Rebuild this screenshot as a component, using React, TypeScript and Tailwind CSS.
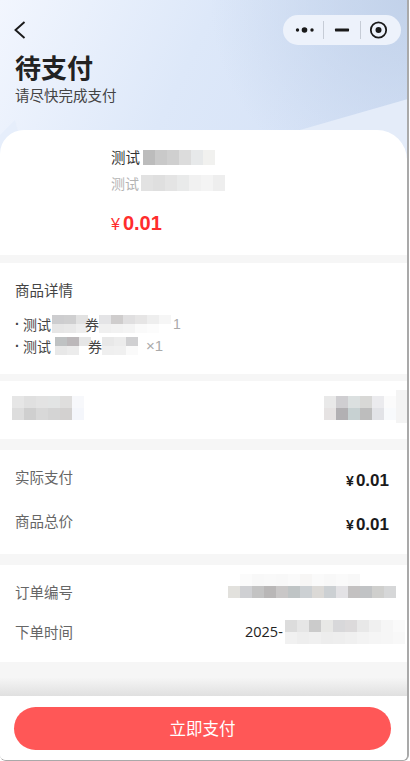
import React from 'react';

const CJK = "font-['Noto_Sans_CJK_SC','Noto_Sans',sans-serif]";
const LATIN = "font-['Liberation_Sans',sans-serif]";

// pixelated privacy blur in the screenshot, one array per row of cells
const Mosaic = ({ rows, className = '', cell = 'h-3' }: { rows: string[][]; className?: string; cell?: string }) => (
  <div className={`flex flex-col shrink-0 ${className}`}>
    {rows.map((row, i) => (
      <div key={i} className="flex">
        {row.map((c, j) => (
          <div key={j} className={`w-3 ${cell} ${c}`} />
        ))}
      </div>
    ))}
  </div>
);

const Yuan = ({ className }: { className: string }) => <span className={className}>¥</span>;

const Gap = ({ className }: { className: string }) => <div className={`bg-[#f6f6f6] shrink-0 ${className}`} />;

const Capsule = () => (
  <div className="h-[30px] w-[118px] rounded-full bg-[#edf2fb] overflow-hidden">
    <svg width="118" height="30" viewBox="0 0 118 30" fill="none">
      <circle cx="14.5" cy="15" r="1.7" fill="#1a1a1a" />
      <circle cx="21.5" cy="15" r="2.8" fill="#1a1a1a" />
      <circle cx="29" cy="15" r="1.7" fill="#1a1a1a" />
      <rect x="40" y="6" width="1" height="18" fill="#c6ccd6" />
      <rect x="52" y="13.6" width="14" height="2.8" rx="0.6" fill="#1a1a1a" />
      <rect x="77" y="6" width="1" height="18" fill="#c6ccd6" />
      <circle cx="95.5" cy="15" r="7.7" stroke="#1a1a1a" strokeWidth="1.8" />
      <circle cx="95.5" cy="15" r="3" fill="#1a1a1a" />
    </svg>
  </div>
);

const Header = () => (
  <div className="relative h-[158px] shrink-0 bg-[radial-gradient(circle_at_100%_0%,#c2d2ea_0%,transparent_45%),linear-gradient(115deg,#f2f6fe_0%,#dde8f9_45%,#d3e0f6_100%)]">
    <svg className="absolute inset-0" width="408" height="158" viewBox="0 0 408 158" fill="none">
      <path d="M408 99 L300 130 L408 158 Z" fill="#e4ecf9" />
      <path d="M0 135 L15 120 L25 158 L0 158 Z" fill="#e6eefb" />
    </svg>
    <div className="relative flex items-start justify-between pt-[15px] pl-[14px] pr-[6px]">
      <svg className="mt-[6px]" width="12" height="18" viewBox="0 0 12 18" fill="none">
        <path d="M10.5 1 L1.5 9 L10.5 17" stroke="#1a1a1a" strokeWidth="1.9" />
      </svg>
      <Capsule />
    </div>
    <div className={`relative pl-[15px] mt-[4px] ${CJK}`}>
      <div className="text-[26px] leading-[36px] font-bold text-[#222]">待支付</div>
      <div className="text-[14.5px] leading-[20px] text-[#444]">请尽快完成支付</div>
    </div>
  </div>
);

const ProductCard = () => (
  <div className={`relative -mt-[28px] h-[125px] shrink-0 bg-white rounded-tl-[24px] rounded-tr-[30px] pl-[111px] pt-[16px] ${CJK}`}>
    <div className="flex items-center h-[22px]">
      <span className="text-[14.5px] leading-[22px] text-[#333]">测试</span>
      <Mosaic
        className="ml-[3px]"
        cell="h-[15px]"
        rows={[['bg-[#bcbcbc]', 'bg-[#c9c9c9]', 'bg-[#cfcfcf]', 'bg-[#dcdcdc]', 'bg-[#e7e9ea]', 'bg-[#f1f1ef]']]}
      />
    </div>
    <div className="flex items-center h-[22px] mt-[4px]">
      <span className="text-[14px] leading-[22px] text-[#b4b4b4]">测试</span>
      <Mosaic
        className="ml-[2px]"
        cell="h-[16px]"
        rows={[['bg-[#e2e2e2]', 'bg-[#dfdfdf]', 'bg-[#e4e4e4]', 'bg-[#e9eaea]', 'bg-[#f1f1f1]', 'bg-[#f4f4f4]', 'bg-[#eeeeee]']]}
      />
    </div>
    <div className={`flex items-baseline mt-[17px] text-[#ff2d2d] font-bold ${LATIN}`}>
      <Yuan className="text-[16px] font-normal mr-[3px]" />
      <span className="text-[20px] leading-[24px]">0.01</span>
    </div>
  </div>
);

const GoodsDetail = () => (
  <div className={`h-[111px] shrink-0 bg-white pl-[15px] pt-[16px] ${CJK}`}>
    <div className="text-[14.5px] leading-[22px] text-[#444]">商品详情</div>
    <div className="flex items-center h-[22px] mt-[12px] text-[14px] text-[#444]">
      <span className={`w-[8px] font-bold ${LATIN}`}>·</span>
      <span>测试</span>
      <Mosaic
        className="ml-[1px]"
        cell="h-[9px]"
        rows={[
          ['bg-[#cdcdcf]', 'bg-[#cfcfd0]', 'bg-[#e2e2e2]'],
          ['bg-[#e6e6e6]', 'bg-[#e8e8e8]', 'bg-[#eeeeee]'],
        ]}
      />
      <span className="ml-[-3px] w-[14px]">券</span>
      <Mosaic
        cell="h-[9px]"
        rows={[
          ['bg-[#e4e4e6]', 'bg-[#cfcdcd]', 'bg-[#e0dfe0]', 'bg-[#e6e5e5]', 'bg-[#eeeeee]', 'bg-[#f6f6f6]'],
          ['bg-[#f0f0f0]', 'bg-[#f2f2f2]', 'bg-[#f4f4f4]', 'bg-[#fafafa]', 'bg-[#fcfcfc]', 'bg-white'],
        ]}
      />
      <span className={`ml-[2px] text-[#aaa] ${LATIN}`}>1</span>
    </div>
    <div className="flex items-center h-[22px] text-[14px] text-[#444]">
      <span className={`w-[8px] font-bold ${LATIN}`}>·</span>
      <span>测试</span>
      <Mosaic
        className="ml-[4px]"
        cell="h-[9px]"
        rows={[
          ['bg-[#bfc2c3]', 'bg-[#bcb8ba]', 'bg-[#e6e6e6]'],
          ['bg-[#e8e8e8]', 'bg-[#ececec]', 'bg-white'],
        ]}
      />
      <span className="ml-[-3px] w-[14px]">券</span>
      <Mosaic
        cell="h-[9px]"
        rows={[
          ['bg-[#e8e8e8]', 'bg-[#ececec]', 'bg-[#d0d0d2]'],
          ['bg-[#efefef]', 'bg-[#f0f0f0]', 'bg-[#fafafa]'],
        ]}
      />
      <span className={`ml-[8px] text-[15px] text-[#aaa] ${LATIN}`}>×1</span>
    </div>
  </div>
);

const BlurRow = () => (
  <div className="h-[58px] shrink-0 bg-white flex justify-between pl-[12px] pt-[15px]">
    <Mosaic
      rows={[
        ['bg-[#e6e6e6]', 'bg-[#e0e0e0]', 'bg-[#e3e3e3]', 'bg-[#e2e4e4]', 'bg-[#dfdedd]', 'bg-[#f7f8fb]'],
        ['bg-[#dddddd]', 'bg-[#cfcfcf]', 'bg-[#d8d8d8]', 'bg-[#d4d4d4]', 'bg-[#d3d1d0]', 'bg-[#f4f6fb]'],
      ]}
    />
    <div className="flex items-start">
      <Mosaic
        rows={[
          ['bg-[#e9e9e9]', 'bg-[#cfced1]', 'bg-[#dbe0e0]', 'bg-[#d8d8d6]', 'bg-[#ebebee]', 'bg-[#fbfbfb]'],
          ['bg-[#e6e3e3]', 'bg-[#b2b0b3]', 'bg-[#c7d1d2]', 'bg-[#bdbdbd]', 'bg-[#e2e3e7]', 'bg-[#f8fafc]'],
        ]}
      />
      <div className="w-[11px] h-[33px] -mt-[6px] bg-[#f4f4f4]" />
    </div>
  </div>
);

const AmountRow = ({ label }: { label: string }) => (
  <div className="flex justify-between items-center h-[44px] pl-[15px] pr-[18px]">
    <span className={`text-[14.5px] text-[#666] -mt-[7px] ${CJK}`}>{label}</span>
    <span className={`flex items-baseline mt-[2px] font-bold text-[#1a1a1a] ${LATIN}`}>
      <Yuan className="text-[14px] mr-[2px]" />
      <span className="text-[17px]">0.01</span>
    </span>
  </div>
);

const OrderInfo = () => (
  <div className={`h-[97px] shrink-0 bg-white pl-[15px] pt-[7px] ${CJK}`}>
    <div className="flex items-center justify-between h-[40px] pr-[11px]">
      <span className="text-[14.5px] text-[#666]">订单编号</span>
      <Mosaic
        className="-mt-[12px]"
        rows={[
          [
            'bg-white', 'bg-[#fbfbfb]', 'bg-[#f8f8f8]', 'bg-[#f9f9f9]', 'bg-[#f8f8f8]', 'bg-[#fafafa]', 'bg-[#f7f6f5]',
            'bg-[#fafafa]', 'bg-[#f8f8f8]', 'bg-[#fafafa]', 'bg-[#f8f8f8]', 'bg-white', 'bg-white', 'bg-white',
          ],
          [
            'bg-[#e2e1dd]', 'bg-[#cfd0d3]', 'bg-[#c3c3c3]', 'bg-[#b9b7b7]', 'bg-[#c9c7c7]', 'bg-[#bfc4c5]', 'bg-[#ccd0d3]',
            'bg-[#dbd9d6]', 'bg-[#ccd0d3]', 'bg-[#e3e2e5]', 'bg-[#c3c1c1]', 'bg-[#c1c3c5]', 'bg-[#cfcfcd]', 'bg-[#d6d7d8]',
          ],
        ]}
      />
    </div>
    <div className="flex items-center h-[40px]">
      <span className="text-[14.5px] text-[#666] w-[230px]">下单时间</span>
      <span className="text-[14.5px] text-[#222] font-['Open_Sans',sans-serif]">2025-</span>
      <Mosaic
        className="ml-[2px]"
        rows={[
          ['bg-[#dcdcdc]', 'bg-[#e6e6e6]', 'bg-[#cbcbcb]', 'bg-[#e8e8e6]', 'bg-[#d8d8da]', 'bg-[#dcdadb]', 'bg-[#e8e8e8]', 'bg-[#f0f0f0]', 'bg-[#f6f6f6]', 'bg-[#fafafa]'],
          ['bg-[#f1f1f1]', 'bg-[#eeeeee]', 'bg-[#f0f0f0]', 'bg-[#ededed]', 'bg-[#eeeeee]', 'bg-[#f0f0f0]', 'bg-[#f3f3f3]', 'bg-[#f5f5f5]', 'bg-[#f6f6f6]', 'bg-[#f8f8f8]'],
        ]}
      />
    </div>
  </div>
);

export default function App() {
  return (
    <div className="w-[410px] h-[761px] bg-white">
      <div className="w-[409px] h-[761px] flex flex-col overflow-hidden bg-[#f6f6f6] border-r-2 border-b border-[#a9a9a9] rounded-b-[6px]">
        <Header />
        <ProductCard />
        <Gap className="h-[8px]" />
        <GoodsDetail />
        <Gap className="h-[7px]" />
        <BlurRow />
        <Gap className="h-[11px]" />
        <div className="h-[104px] shrink-0 bg-white pt-[8px]">
          <AmountRow label="实际支付" />
          <AmountRow label="商品总价" />
        </div>
        <Gap className="h-[11px]" />
        <OrderInfo />
        <div className="flex-1 bg-[linear-gradient(180deg,#f6f6f6_45%,#e0e0e0_100%)]" />
        <div className="h-[64px] shrink-0 bg-white pl-[14px] pr-[16px] pt-[11px]">
          <button className={`w-full h-[43px] rounded-full bg-[#ff5757] text-white text-[16.5px] ${CJK}`}>立即支付</button>
        </div>
      </div>
    </div>
  );
}
